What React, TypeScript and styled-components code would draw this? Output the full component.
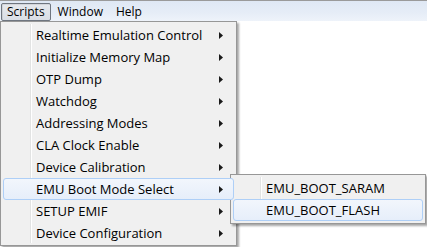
import styled, { createGlobalStyle } from 'styled-components';

const GlobalStyle = createGlobalStyle`
  html, body {
    margin: 0;
    padding: 0;
    background: #ffffff;
  }
  body {
    font-family: "Open Sans", "Noto Sans", sans-serif;
    font-size: 12px;
    color: #000000;
  }
`;

interface MenuItemDef {
  label: string;
  hasSub?: boolean;
  active?: boolean;
}

const scriptItems: MenuItemDef[] = [
  { label: 'Realtime Emulation Control', hasSub: true },
  { label: 'Initialize Memory Map', hasSub: true },
  { label: 'OTP Dump', hasSub: true },
  { label: 'Watchdog', hasSub: true },
  { label: 'Addressing Modes', hasSub: true },
  { label: 'CLA Clock Enable', hasSub: true },
  { label: 'Device Calibration', hasSub: true },
  { label: 'EMU Boot Mode Select', hasSub: true, active: true },
  { label: 'SETUP EMIF', hasSub: true },
  { label: 'Device Configuration', hasSub: true },
];

const bootItems: MenuItemDef[] = [
  { label: 'EMU_BOOT_SARAM' },
  { label: 'EMU_BOOT_FLASH', active: true },
];

const Arrow = () => (
  <ArrowSvg width="4" height="7" viewBox="0 0 4 7">
    <path d="M0 0 L4 3.5 L0 7 Z" fill="#1a1a1a" />
  </ArrowSvg>
);

const Menu = ({ items }: { items: MenuItemDef[] }) => (
  <>
    {items.map((item) => (
      <Item key={item.label} $active={item.active}>
        <Label>{item.label}</Label>
        {item.hasSub && <Arrow />}
      </Item>
    ))}
  </>
);

const App = () => {
  return (
    <Page>
      <GlobalStyle />
      <MenuBar>
        <BarItem $open>Scripts</BarItem>
        <BarItem>Window</BarItem>
        <BarItem>Help</BarItem>
      </MenuBar>
      <Dropdown>
        <Menu items={scriptItems} />
      </Dropdown>
      <SubMenu>
        <Menu items={bootItems} />
      </SubMenu>
    </Page>
  );
};

export default App;

const Page = styled.div`
  position: relative;
  width: 427px;
  height: 247px;
  overflow: hidden;
  background: #ffffff;
`;

const MenuBar = styled.div`
  height: 20px;
  border-top: 1px solid #9a9a9a;
  background: linear-gradient(#dfe8f4, #e6edf7 60%, #eef3fa);
  display: flex;
  align-items: flex-end;
  padding-left: 1px;
  gap: 1px;
`;

const BarItem = styled.div<{ $open?: boolean }>`
  height: 18px;
  box-sizing: border-box;
  padding: 0 5px;
  display: flex;
  align-items: center;
  line-height: 1;
  font-size: 12px;
  border: 1px solid ${(p) => (p.$open ? '#6f7680' : 'transparent')};
  border-radius: 2px;
  background: ${(p) => (p.$open ? 'linear-gradient(#e6e9ee, #d9dee6)' : 'transparent')};
  box-shadow: ${(p) => (p.$open ? 'inset 1px 1px 0 rgba(0,0,0,0.08)' : 'none')};
`;

const MenuPanel = styled.div`
  position: absolute;
  box-sizing: border-box;
  background: #f0f0f0;
  border: 1px solid #979797;
  box-shadow: 2px 2px 2px rgba(0, 0, 0, 0.35);
  padding: 2px;
  display: flex;
  flex-direction: column;

  &::before {
    content: "";
    position: absolute;
    top: 2px;
    bottom: 2px;
    left: 29px;
    width: 1px;
    background: #e2e3e3;
    box-shadow: 1px 0 0 #ffffff;
  }
`;

const Dropdown = styled(MenuPanel)`
  left: 0;
  top: 21px;
  width: 237px;
  padding-bottom: 1px;
`;

const SubMenu = styled(MenuPanel)`
  left: 230px;
  top: 174px;
  width: 196px;
`;

const Item = styled.div<{ $active?: boolean }>`
  position: relative;
  z-index: 1;
  height: 22px;
  box-sizing: border-box;
  display: flex;
  align-items: center;
  padding: 0 10px 0 32px;
  border: 1px solid ${(p) => (p.$active ? '#aecff7' : 'transparent')};
  border-radius: 3px;
  background: ${(p) => (p.$active ? 'linear-gradient(#f2f6fc, #e6eefa)' : 'transparent')};
`;

const Label = styled.span`
  flex: 1;
  white-space: nowrap;
  line-height: 1;
  font-size: 13px;
`;

const ArrowSvg = styled.svg`
  display: block;
  flex: none;
`;
